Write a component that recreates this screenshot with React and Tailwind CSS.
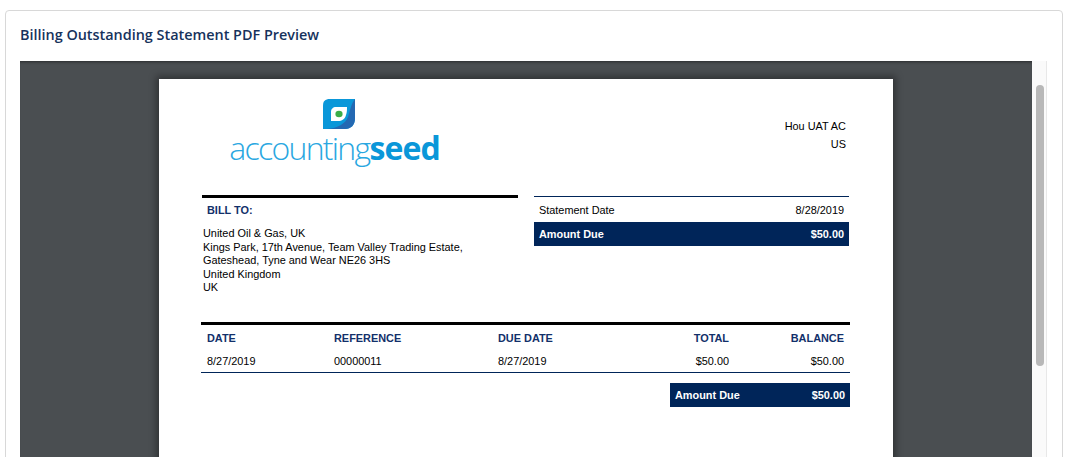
import React from 'react';

const arial = 'font-["Liberation_Sans",Arial,sans-serif]';

const AmountDue = ({ className = '' }) => (
  <div className={`flex h-6 items-center justify-between bg-[#002559] px-[5px] text-[10.9px] font-bold text-white ${className}`}>
    <span>Amount Due</span>
    <span>$50.00</span>
  </div>
);

const Logo = () => (
  <div className="flex w-[211px] flex-col items-center">
    <svg width="32" height="30" viewBox="0 0 32 30" className="mr-[-8px]">
      <path d="M7 0H32V19C32 26 28 30 22 30H0V7C0 2 2 0 7 0Z" fill="#0a97d9" />
      <path d="M32 0V19C32 26 28 30 22 30H4C15 29 22 25 25 18C27 12 28 5 32 0Z" fill="#2468b2" />
      <path d="M13 8H24C24 11 24 13 23 16C22 20 19 22 15 22H8V13C8 10 10 8 13 8Z" fill="#fff" />
      <ellipse cx="16" cy="15" rx="3.6" ry="3.2" fill="#3bad49" />
    </svg>
    <div className="mt-[-1px] flex h-[39px] items-center font-['Open_Sans',sans-serif] text-[32px] leading-none text-[#29a7e1]">
      <span className="font-light tracking-[-1.7px]">accounting</span>
      <span className="font-bold tracking-[-0.9px] text-[#0a97d9]">seed</span>
    </div>
  </div>
);

export default function App() {
  return (
    <div className="h-[457px] overflow-hidden bg-white pl-[5px] pr-[7px] pt-[10px]">
      <div className="h-[460px] rounded border border-[#d8d8d8] px-[14px]">
        <h1 className="flex h-[50px] items-center pb-[2px] font-['Open_Sans',sans-serif] text-[14.4px] font-semibold text-[#16325c]">
          Billing Outstanding Statement PDF Preview
        </h1>
        <div className="flex h-[400px]">
          <div className={`h-full w-[1012px] overflow-hidden bg-[#4a4e51] pt-[18px] shadow-[inset_0_3px_3px_-2px_rgba(0,0,0,0.45)] ${arial}`}>
            <div className="ml-[139px] h-[500px] w-[734px] bg-white pl-[42px] pr-[44px] pt-5 text-[10.9px] text-black shadow-[0_0_7px_3px_rgba(0,0,0,0.35)]">
              <div className="flex h-[96px] justify-between">
                <div className="pl-7">
                  <Logo />
                </div>
                <div className="mr-[3px] pt-[18px] text-right leading-[18px]">
                  <p>Hou UAT AC</p>
                  <p>US</p>
                </div>
              </div>

              <div className="flex justify-between pl-px">
                <div className="w-[316px] border-t-[3px] border-black">
                  <p className="pl-[5px] pt-[6px] font-bold leading-[13px] text-[#12306a]">BILL TO:</p>
                  <div className="mt-[10px] h-[68px] pl-px leading-[13.5px]">
                    <p>United Oil &amp; Gas, UK</p>
                    <p>Kings Park, 17th Avenue, Team Valley Trading Estate,</p>
                    <p>Gateshead, Tyne and Wear NE26 3HS</p>
                    <p>United Kingdom</p>
                    <p>UK</p>
                  </div>
                </div>
                <div className="mt-px w-[315px] border-t border-[#002559]">
                  <div className="flex h-[25px] items-center justify-between px-[5px] pt-[2px]">
                    <span>Statement Date</span>
                    <span>8/28/2019</span>
                  </div>
                  <AmountDue />
                </div>
              </div>

              <div className="mt-[27px] w-[649px] border-t-[3px] border-black">
                <div className="grid grid-cols-[127px_164px_130px_113px_115px] pt-[7px] leading-[13px]">
                  <span className="pl-[6px] font-bold text-[#12306a]">DATE</span>
                  <span className="pl-[6px] font-bold text-[#12306a]">REFERENCE</span>
                  <span className="pl-[6px] font-bold text-[#12306a]">DUE DATE</span>
                  <span className="pr-[6px] text-right font-bold text-[#12306a]">TOTAL</span>
                  <span className="pr-[6px] text-right font-bold text-[#12306a]">BALANCE</span>
                </div>
                <div className="grid h-[28px] grid-cols-[127px_164px_130px_113px_115px] items-center border-b border-[#002559] pt-[6px]">
                  <span className="pl-[6px]">8/27/2019</span>
                  <span className="pl-[6px]">00000011</span>
                  <span className="pl-[6px]">8/27/2019</span>
                  <span className="pr-[6px] text-right">$50.00</span>
                  <span className="pr-[6px] text-right">$50.00</span>
                </div>
                <AmountDue className="ml-auto mt-[10px] w-[180px]" />
              </div>
            </div>
          </div>
          <div className="relative h-full w-[15px] border-r border-[#e8e8e8] bg-[#fafafa]">
            <div className="absolute left-[4px] top-[24px] h-[281px] w-2 rounded-full bg-[#b8b8b8]" />
          </div>
        </div>
      </div>
    </div>
  );
}
